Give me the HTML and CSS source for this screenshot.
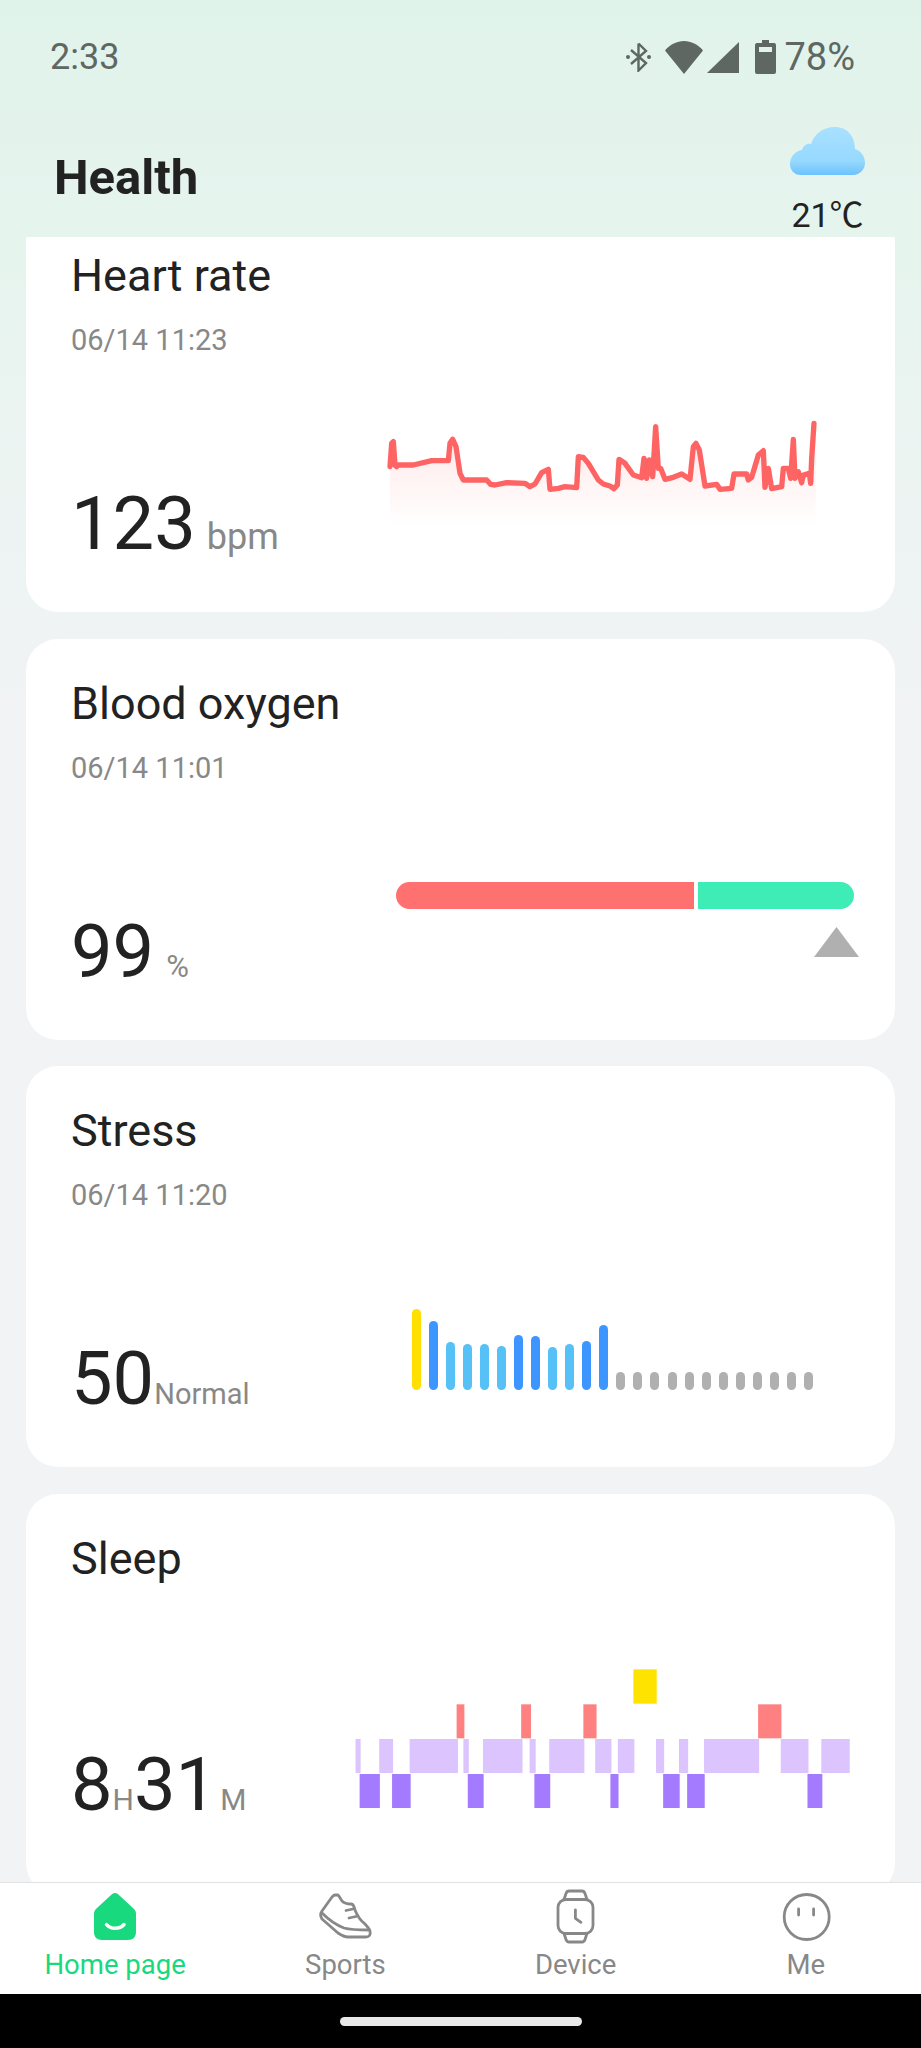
FILE: index.html
```html
<!DOCTYPE html>
<html lang="en">
<head>
    <meta charset="UTF-8">
    <meta name="viewport" content="width=device-width, initial-scale=1.0">
    <title>Health</title>
    <link rel="stylesheet" href="styles.css">
</head>
<body>
    <div class="app">
        <div class="status-bar">
            <span class="clock">2:33</span>
            <div class="status-icons">
                <svg class="icon-bt" width="25" height="30" viewBox="0 0 25 30"><path d="M12.500 1.500v27L20 21 5 8M12.500 1.500 20 9 5 22" fill="none" stroke="#5f6763" stroke-width="2.400"/><circle cx="2" cy="15" r="2" fill="#5f6763"/><circle cx="23" cy="15" r="2" fill="#5f6763"/></svg>
                <svg class="icon-wifi" width="38" height="33" viewBox="0 0 38 33"><path d="M19 33 0 9.500C5 3.500 12 0 19 0s14 3.500 19 9.500z" fill="#5f6763"/></svg>
                <svg class="icon-signal" width="32" height="31" viewBox="0 0 32 31"><path d="M32 0v31H0z" fill="#5f6763"/></svg>
                <svg class="icon-battery" width="21" height="34" viewBox="0 0 21 34"><path d="M7 0h7v3h5a2 2 0 0 1 2 2v27a2 2 0 0 1-2 2H2a2 2 0 0 1-2-2V5a2 2 0 0 1 2-2h5z" fill="#5f6763"/><rect x="4" y="7" width="13" height="5" fill="#e2f3eb"/></svg>
                <span class="battery-text">78%</span>
            </div>
        </div>

        <div class="header">
            <div class="page-title">Health</div>
            <div class="weather">
                <svg width="75" height="48" viewBox="0 0 75 48">
                    <defs>
                        <linearGradient id="cloudFill" x1="0" y1="0" x2="0" y2="1">
                            <stop offset="0" stop-color="#a9e1ff"/>
                            <stop offset="0.7" stop-color="#97d9ff"/>
                            <stop offset="1" stop-color="#6cc2fb"/>
                        </linearGradient>
                    </defs>
                    <path d="M11 48C4 48 0 43 0 37c0-7 5-13 12-14 1-4 5-7 9-6C24 7 33 0 45 0c12 0 20 9 20 22 6 2 10 7 10 14 0 6-5 12-12 12z" fill="url(#cloudFill)"/>
                </svg>
                <span class="temp">21℃</span>
            </div>
        </div>

        <div class="card-list">
            <div class="card card-first">
                <div class="card-title">Heart rate</div>
                <div class="card-date">06/14 11:23</div>
                <div class="card-row">
                    <div class="value">123<span class="unit unit-bpm">bpm</span></div>
                    <svg class="chart-heart" width="470" height="150" viewBox="0 0 1410 450">
                        <defs>
                            <linearGradient id="heartFill" x1="0" y1="0" x2="0" y2="1">
                                <stop offset="0" stop-color="#ff6464" stop-opacity="0.16"/>
                                <stop offset="1" stop-color="#ff6464" stop-opacity="0"/>
                            </linearGradient>
                        </defs>
                        <path d="M60 200L65 130 70 125 75 195 80 200 85 195 130 195 185 182 235 182 240 130 248 118 258 140 270 220 280 240 350 240 362 253 375 255 410 248 465 250 480 260 495 252 515 218 535 208 540 268 565 265 585 260 620 263 625 170 640 172 655 190 685 240 700 252 720 258 732 266 742 255 747 178 765 190 790 225 815 233 822 175 830 235 838 180 848 230 857 80 865 205 872 205 885 238 910 232 935 222 960 238 970 140 978 130 988 150 1005 258 1040 253 1050 268 1085 265 1092 222 1130 222 1135 240 1145 232 1165 165 1180 152 1185 262 1195 205 1205 266 1235 260 1240 205 1255 205 1262 235 1270 118 1275 235 1285 215 1295 248 1300 225 1318 220 1322 250 1325 175 1332 70 1337 70V378H60z" fill="url(#heartFill)"/>
                        <path d="M60 200L65 130 70 125 75 195 80 200 85 195 130 195 185 182 235 182 240 130 248 118 258 140 270 220 280 240 350 240 362 253 375 255 410 248 465 250 480 260 495 252 515 218 535 208 540 268 565 265 585 260 620 263 625 170 640 172 655 190 685 240 700 252 720 258 732 266 742 255 747 178 765 190 790 225 815 233 822 175 830 235 838 180 848 230 857 80 865 205 872 205 885 238 910 232 935 222 960 238 970 140 978 130 988 150 1005 258 1040 253 1050 268 1085 265 1092 222 1130 222 1135 240 1145 232 1165 165 1180 152 1185 262 1195 205 1205 266 1235 260 1240 205 1255 205 1262 235 1270 118 1275 235 1285 215 1295 248 1300 225 1318 220 1322 250 1325 175 1332 70" fill="none" stroke="#ff6464" stroke-width="16" stroke-linejoin="round" stroke-linecap="round"/>
                    </svg>
                </div>
            </div>

            <div class="card">
                <div class="card-title">Blood oxygen</div>
                <div class="card-date">06/14 11:01</div>
                <div class="card-row">
                    <div class="value">99<span class="unit unit-percent">%</span></div>
                    <div class="gauge">
                        <div class="gauge-bar">
                            <div class="gauge-low"></div>
                            <div class="gauge-high"></div>
                        </div>
                        <svg class="gauge-marker" width="45" height="30" viewBox="0 0 45 30"><path d="M22.500 0 45 30H0z" fill="#b0b0b0"/></svg>
                    </div>
                </div>
            </div>

            <div class="card">
                <div class="card-title">Stress</div>
                <div class="card-date">06/14 11:20</div>
                <div class="card-row">
                    <div class="value">50<span class="unit unit-normal">Normal</span></div>
                    <div class="stress-bars">
                        <i class="yellow" style="height:81px"></i>
                        <i class="blue" style="height:69px"></i>
                        <i class="sky" style="height:48px"></i>
                        <i class="sky" style="height:46px"></i>
                        <i class="sky" style="height:46px"></i>
                        <i class="sky" style="height:44px"></i>
                        <i class="blue" style="height:55px"></i>
                        <i class="blue" style="height:54px"></i>
                        <i class="sky" style="height:43px"></i>
                        <i class="sky" style="height:46px"></i>
                        <i class="blue" style="height:49px"></i>
                        <i class="blue" style="height:65px"></i>
                        <i></i><i></i><i></i><i></i><i></i><i></i>
                        <i></i><i></i><i></i><i></i><i></i><i></i>
                    </div>
                </div>
            </div>

            <div class="card card-sleep">
                <div class="card-title">Sleep</div>
                <div class="card-row">
                    <div class="value">8<span class="unit unit-h">H</span>31<span class="unit unit-m">M</span></div>
                    <svg class="chart-sleep" width="530" height="157" viewBox="0 0 1568 471" preserveAspectRatio="none">
                        <g fill="#ffe300"><rect x="868" y="55" width="69" height="103"/></g>
                        <g fill="#ff8080">
                            <rect x="345" y="160" width="23" height="102"/>
                            <rect x="536" y="160" width="29" height="102"/>
                            <rect x="720" y="160" width="39" height="102"/>
                            <rect x="1237" y="160" width="69" height="102"/>
                        </g>
                        <g fill="#dcc4ff">
                            <rect x="46" y="264" width="15" height="102"/>
                            <rect x="116" y="264" width="41" height="102"/>
                            <rect x="206" y="264" width="143" height="102"/>
                            <rect x="365" y="264" width="16" height="102"/>
                            <rect x="423" y="264" width="117" height="102"/>
                            <rect x="561" y="264" width="18" height="102"/>
                            <rect x="619" y="264" width="104" height="102"/>
                            <rect x="755" y="264" width="48" height="102"/>
                            <rect x="822" y="264" width="49" height="102"/>
                            <rect x="935" y="264" width="24" height="102"/>
                            <rect x="1003" y="264" width="27" height="102"/>
                            <rect x="1077" y="264" width="163" height="102"/>
                            <rect x="1304" y="264" width="82" height="102"/>
                            <rect x="1424" y="264" width="84" height="102"/>
                        </g>
                        <g fill="#a47bff">
                            <rect x="58" y="369" width="60" height="102"/>
                            <rect x="154" y="369" width="55" height="102"/>
                            <rect x="378" y="369" width="47" height="102"/>
                            <rect x="575" y="369" width="47" height="102"/>
                            <rect x="800" y="369" width="24" height="102"/>
                            <rect x="956" y="369" width="49" height="102"/>
                            <rect x="1027" y="369" width="52" height="102"/>
                            <rect x="1383" y="369" width="44" height="102"/>
                        </g>
                    </svg>
                </div>
            </div>
        </div>

        <div class="tab-bar">
            <div class="tab tab-active">
                <svg width="52" height="52" viewBox="0 0 52 52"><path d="M26 2c2 0 3 1 5 3l13 12c2 2 3 3 3 6v18c0 5-3 8-8 8H13c-5 0-8-3-8-8V23c0-3 1-4 3-6L21 5c2-2 3-3 5-3z" fill="#19d97f"/><path d="M17.500 33.500c4 5 13 5 17.500 0" fill="none" stroke="#fff" stroke-width="3.500" stroke-linecap="round"/></svg>
                <span>Home page</span>
            </div>
            <div class="tab">
                <svg width="52" height="52" viewBox="0 0 52 52"><g fill="none" stroke="#888" stroke-width="2.800" stroke-linejoin="round" stroke-linecap="round"><path d="M16 4c-1 0-2 1-3 2L3 20c-2 3-2 5 0 8l16 14c3 2 6 4 10 4h18c3 0 5-2 4-6-1-3-3-5-6-8-4-3-7-8-9-13-1-3-1-6-4-6-3 0-7-1-9-3-1-1-2-4-4-6z"/><path d="M3 22c6 6 14 12 22 15 7 2 16 2 25 2"/><path d="M27 19.500l7-1.500M30 27l7-1.500"/></g></svg>
                <span>Sports</span>
            </div>
            <div class="tab">
                <svg width="52" height="52" viewBox="0 0 52 52"><g fill="none" stroke="#888" stroke-width="2.800" stroke-linejoin="round" stroke-linecap="round"><rect x="8" y="8.500" width="35" height="34" rx="8"/><path d="M14 8.500l2-6c.5-1.500 1.500-2.500 3-2.500h13c1.500 0 2.500 1 3 2.500l2 6M14 42.500l2 6c.5 1.500 1.500 2.500 3 2.500h13c1.500 0 2.500-1 3-2.500l2-6"/><path d="M25.400 19v8.300l5.600 4"/></g></svg>
                <span>Device</span>
            </div>
            <div class="tab">
                <svg width="52" height="52" viewBox="0 0 52 52"><g fill="none" stroke="#888" stroke-width="2.800" stroke-linecap="round"><circle cx="26.700" cy="26" r="22.500"/><path d="M18.600 18v6M33.600 18v6"/></g></svg>
                <span>Me</span>
            </div>
        </div>

        <div class="gesture-bar">
            <div class="gesture-pill"></div>
        </div>
    </div>
</body>
</html>
```

FILE: styles.css
```css
* {
    box-sizing: border-box;
}

body {
    margin: 0;
    font-family: Roboto, 'Noto Sans CJK SC', Arial, sans-serif;
    color: #222;
}

.app {
    display: flex;
    flex-direction: column;
    width: 921px;
    height: 2048px;
    overflow: hidden;
    background: linear-gradient(to bottom, #e0f3ea 0, #e6f4ee 240px, #f1f3f5 700px);
}

/* Status bar */
.status-bar {
    display: flex;
    justify-content: space-between;
    align-items: center;
    height: 112px;
    padding: 2px 66px 0 50px;
    color: #5f6763;
}

.clock {
    font-size: 36px;
}

.battery-text {
    font-size: 38px;
}

.status-icons {
    display: flex;
    align-items: center;
    gap: 4px;
}

.icon-bt {
    margin-right: 10px;
}

.icon-battery {
    margin: 0 4px 0 12px;
}

/* Header */
.header {
    display: flex;
    justify-content: space-between;
    height: 125px;
    padding: 15px 56px 0 54px;
}

.page-title {
    margin-top: 23px;
    font-size: 49px;
    font-weight: 700;
    line-height: 56px;
}

.weather {
    display: flex;
    flex-direction: column;
    align-items: center;
    gap: 23px;
}

.temp {
    font-size: 34px;
    line-height: 34px;
}

/* Cards */
.card-list {
    display: flex;
    flex-direction: column;
    flex: 1;
    gap: 26.5px;
    min-height: 0;
    padding: 0 26px;
    overflow: hidden;
}

.card {
    display: flex;
    flex-direction: column;
    flex: none;
    height: 401px;
    padding: 40px 0 50px 45px;
    background-color: #fff;
    border-radius: 32px;
}

.card-first {
    margin-top: -26px;
}

.card-title {
    font-size: 45px;
    line-height: 50px;
}

.card-date {
    margin-top: 23px;
    color: #888;
    font-size: 29px;
    line-height: 32px;
}

.card-row {
    display: flex;
    justify-content: space-between;
    align-items: flex-end;
    margin-top: auto;
}

.value {
    font-size: 74px;
    line-height: 76px;
}

.unit {
    color: #888;
    line-height: 1;
}

.unit-bpm {
    margin-left: 11px;
    font-size: 36px;
}

.unit-percent {
    margin-left: 12px;
    font-size: 31px;
}

.unit-normal {
    font-size: 29px;
}

.unit-h {
    font-size: 30px;
}

.unit-m {
    margin-left: 3px;
    font-size: 30px;
}

.chart-heart {
    margin: 0 55px 12px 0;
}

/* Blood oxygen gauge */
.gauge {
    display: flex;
    flex-direction: column;
    align-items: flex-end;
    gap: 18px;
    width: 463px;
    margin: 0 36px 33px 0;
}

.gauge-bar {
    display: flex;
    gap: 4px;
    width: 458px;
    height: 27px;
    margin-right: 5px;
}

.gauge-low {
    flex: 298;
    background-color: #ff7070;
    border-radius: 14px 0 0 14px;
}

.gauge-high {
    flex: 156;
    background-color: #3eedb6;
    border-radius: 0 14px 14px 0;
}

/* Stress bars */
.stress-bars {
    display: flex;
    align-items: flex-end;
    gap: 8.07px;
    margin: 0 82px 27px 0;
}

.stress-bars i {
    width: 9px;
    height: 18px;
    background-color: #b0b0b0;
    border-radius: 5px;
}

.stress-bars .yellow {
    background-color: #ffe000;
}

.stress-bars .blue {
    background-color: #3d96ff;
}

.stress-bars .sky {
    background-color: #55c1f7;
}

.card-sleep {
    padding-bottom: 72px;
}

.chart-sleep {
    margin: 0 25px 15px 0;
}

/* Bottom tabs */
.tab-bar {
    display: grid;
    grid-template-columns: repeat(4, 1fr);
    flex: none;
    height: 112px;
    background-color: #fff;
    border-top: 1px solid #e2e2e2;
}

.tab {
    display: flex;
    flex-direction: column;
    align-items: center;
    gap: 7px;
    padding-top: 8px;
    color: #888;
    font-size: 27.5px;
    line-height: 30px;
}

.tab svg {
    overflow: visible;
}

.tab-active {
    color: #19d97f;
}

.gesture-bar {
    display: flex;
    justify-content: center;
    flex: none;
    height: 54px;
    padding-top: 23px;
    background-color: #000;
}

.gesture-pill {
    width: 242px;
    height: 9px;
    background-color: #e8e8e8;
    border-radius: 5px;
}
```
